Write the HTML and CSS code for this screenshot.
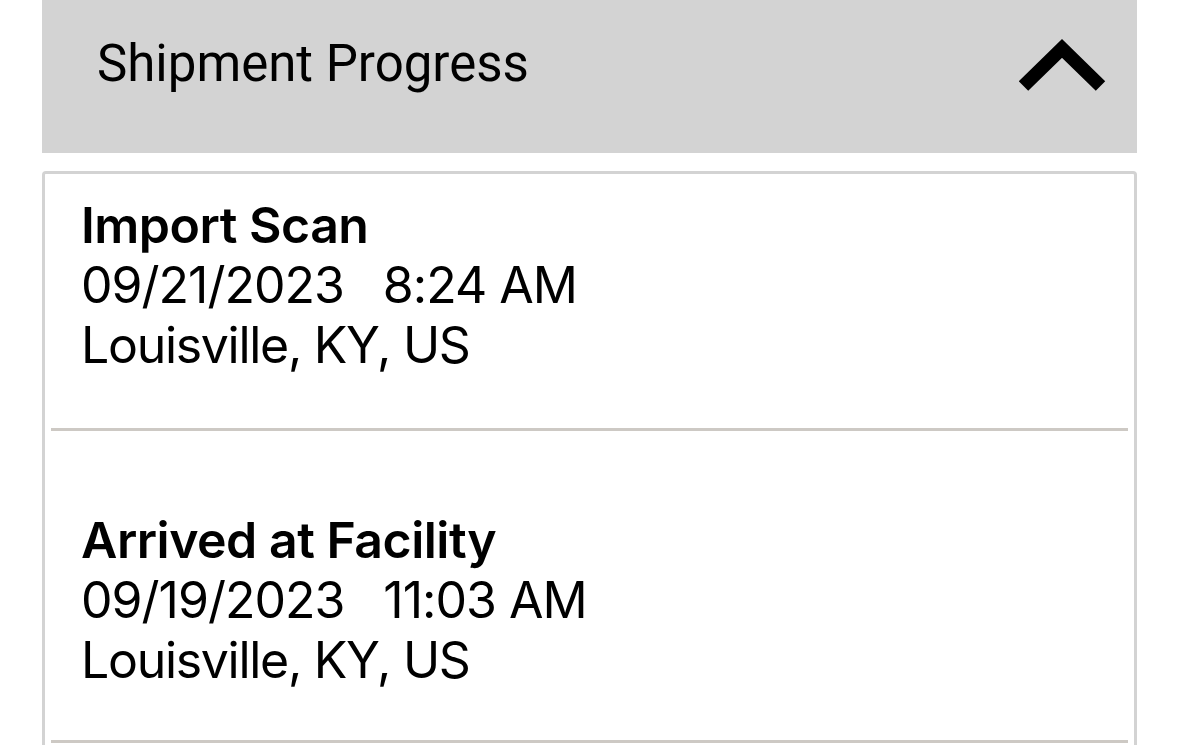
FILE: index.html
```html
<!DOCTYPE html>
<html>
<head>
<meta charset="utf-8">
<link rel="stylesheet" href="styles.css">
</head>
<body>
<div class="panel">
  <div class="panel-header">
    <div class="panel-title">Shipment Progress</div>
    <svg class="chevron" width="90" height="56" viewBox="0 0 90 56">
      <polyline points="4.5,48 43,10.5 81.5,48" fill="none" stroke="#000" stroke-width="13.5" stroke-linejoin="miter" stroke-linecap="butt"/>
    </svg>
  </div>
  <div class="events">
    <div class="event event-first">
      <div class="event-title">Import Scan</div>
      <div class="event-line"><span>09/21/2023</span><span class="event-time">8:24 AM</span></div>
      <div class="event-line event-place">Louisville, KY, US</div>
    </div>
    <div class="divider"></div>
    <div class="event">
      <div class="event-title">Arrived at Facility</div>
      <div class="event-line"><span>09/19/2023</span><span class="event-time">11:03 AM</span></div>
      <div class="event-line event-place">Louisville, KY, US</div>
    </div>
    <div class="divider"></div>
  </div>
</div>
</body>
</html>
```
FILE: styles.css
```css
html, body {
  margin: 0;
  padding: 0;
  background: #ffffff;
  overflow: hidden;
}
body {
  height: 745px;
}
.panel {
  margin: 0 42px;
}
.panel-header {
  background: #d3d3d3;
  height: 153px;
  display: flex;
  justify-content: space-between;
  align-items: flex-start;
  padding: 0 28px 0 55px;
  box-sizing: border-box;
}
.panel-title {
  font-family: Roboto, "Liberation Sans", sans-serif;
  font-size: 51px;
  color: #000;
  line-height: 1;
  padding-top: 38px;
}
.chevron {
  margin-top: 38px;
  display: block;
}
.events {
  margin-top: 18px;
  border: 3px solid #d3d3d3;
  border-bottom: none;
  border-radius: 4px 4px 0 0;
  padding: 0 6px;
  height: 600px;
}
.event {
  padding: 79px 30px 50px;
  font-family: Inter, "Noto Sans", sans-serif;
  color: #000;
  font-size: 50px;
  line-height: 60px;
}
.event-first {
  padding-top: 21px;
  padding-bottom: 53px;
}
.event-title {
  font-weight: 600;
  letter-spacing: -0.5px;
}
.event-line {
  letter-spacing: -1px;
}
.event-place {
  letter-spacing: -1.3px;
}
.event-time {
  margin-left: 39px;
}
.divider {
  height: 3px;
  background: #cdc9c4;
}
```
